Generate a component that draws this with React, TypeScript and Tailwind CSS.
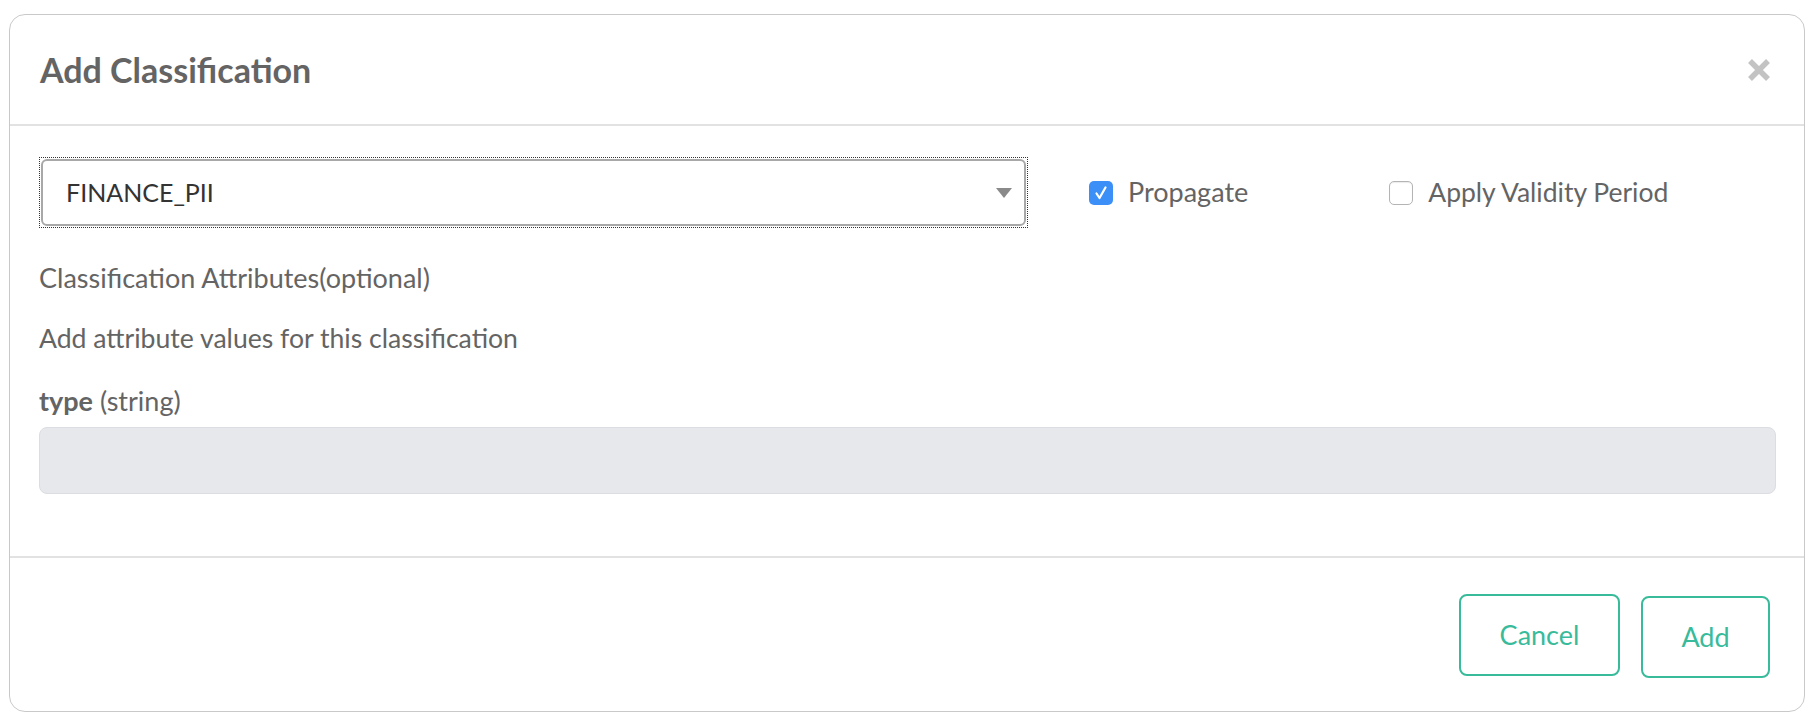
import { useState } from "react";

export default function App() {
  const [propagate, setPropagate] = useState(true);
  const [validity, setValidity] = useState(false);

  return (
    <div
      className="min-h-[724px] w-full bg-white pt-[14px] px-[9px]"
      style={{ fontFamily: "Lato, 'Open Sans', sans-serif" }}
    >
      <div className="w-full rounded-[16px] border border-[#c9c9c9] bg-white">
        {/* Header */}
        <div className="flex h-[111px] items-center justify-between border-b-2 border-[#e2e2e2] pl-[30px] pr-[32px]">
          <h2 className="text-[34px] font-bold text-[#646464]">Add Classification</h2>
          <button className="flex h-[26px] w-[26px] items-center justify-center">
            <svg width="24" height="24" viewBox="0 0 24 24">
              <path d="M3 3 L21 21 M21 3 L3 21" stroke="#c3c3c3" strokeWidth="5.5" strokeLinecap="butt" />
            </svg>
          </button>
        </div>

        {/* Body */}
        <div className="border-b-2 border-[#e2e2e2] px-[29px] pt-[31px] pb-[62px] text-[#646464]">
          <div className="flex h-[71px] items-center">
            <div className="w-[989px] border border-dotted border-[#333] p-px">
              <div className="flex h-[67px] items-center justify-between rounded-[6px] border-2 border-[#a8a8a8] pl-[23px] pr-[12px]">
                <span className="text-[25px] text-[#333]">FINANCE_PII</span>
                <svg width="16" height="10" viewBox="0 0 16 10">
                  <path d="M0 0 H16 L8 10 Z" fill="#8a8a8a" />
                </svg>
              </div>
            </div>

            <label className="ml-[61px] flex cursor-pointer items-center" onClick={() => setPropagate(!propagate)}>
              <span
                className={
                  propagate
                    ? "flex h-[24px] w-[24px] items-center justify-center rounded-[5px] bg-[#3b8ff6]"
                    : "flex h-[24px] w-[24px] items-center justify-center rounded-[5px] border-[1.5px] border-[#b4b4b4] bg-white"
                }
              >
                {propagate && (
                  <svg width="18" height="18" viewBox="0 0 18 18">
                    <path d="M4.5 9.5 L7.5 14 L13.5 3.5" stroke="#fff" strokeWidth="2.2" fill="none" strokeLinecap="round" strokeLinejoin="round" />
                  </svg>
                )}
              </span>
              <span className="ml-[15px] text-[27px]">Propagate</span>
            </label>

            <label className="ml-[141px] flex cursor-pointer items-center" onClick={() => setValidity(!validity)}>
              <span
                className={
                  validity
                    ? "flex h-[24px] w-[24px] items-center justify-center rounded-[5px] bg-[#3b8ff6]"
                    : "flex h-[24px] w-[24px] items-center justify-center rounded-[5px] border-[1.5px] border-[#b4b4b4] bg-white shadow-[inset_0_1px_1px_rgba(0,0,0,0.08)]"
                }
              >
                {validity && (
                  <svg width="18" height="18" viewBox="0 0 18 18">
                    <path d="M4.5 9.5 L7.5 14 L13.5 3.5" stroke="#fff" strokeWidth="2.2" fill="none" strokeLinecap="round" strokeLinejoin="round" />
                  </svg>
                )}
              </span>
              <span className="ml-[15px] text-[26.5px]">Apply Validity Period</span>
            </label>
          </div>

          <p className="mt-[30px] text-[27px] leading-[40px]">Classification Attributes(optional)</p>
          <p className="mt-[20px] text-[26.6px] leading-[40px]">Add attribute values for this classification</p>
          <p className="mt-[23px] text-[27px] leading-[40px]">
            <span className="font-bold">type</span> (string)
          </p>
          <div className="mt-[6px] h-[67px] w-[1737px] rounded-[8px] border border-[#dcdde2] bg-[#e7e8ec]" />
        </div>

        {/* Footer */}
        <div className="flex justify-end gap-[21px] pt-[36px] pb-[33px] pr-[34px]">
          <button className="h-[82px] w-[161px] rounded-[8px] border-2 border-[#38bb9b] text-[27px] text-[#38bb9b]">
            Cancel
          </button>
          <button className="mt-[2px] h-[82px] w-[129px] rounded-[8px] border-2 border-[#38bb9b] text-[27px] text-[#38bb9b]">
            Add
          </button>
        </div>
      </div>
    </div>
  );
}
